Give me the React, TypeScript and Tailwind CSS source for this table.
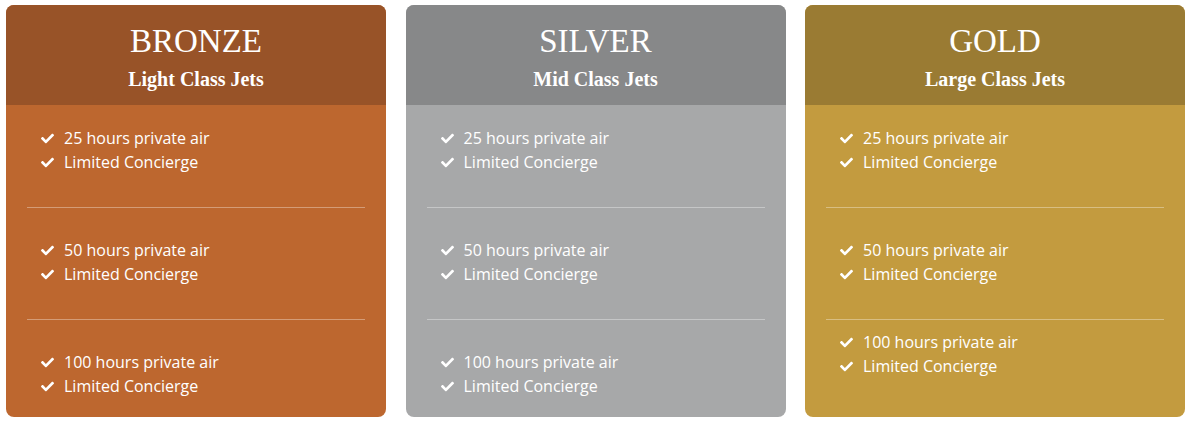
import React from "react";
import { FaCheck } from "react-icons/fa";

type Plan = {
  title: string;
  subtitle: string;
  header: string;
  body: string;
  sections: { hours: string; pt: string }[];
};

const plans: Plan[] = [
  {
    title: "BRONZE",
    subtitle: "Light Class Jets",
    header: "bg-[#985328]",
    body: "bg-[#bd672f]",
    sections: [
      { hours: "25 hours private air", pt: "pt-[21px] pb-[33px]" },
      { hours: "50 hours private air", pt: "pt-[30px] pb-[33px]" },
      { hours: "100 hours private air", pt: "pt-[30px] pb-[19px]" },
    ],
  },
  {
    title: "SILVER",
    subtitle: "Mid Class Jets",
    header: "bg-[#878889]",
    body: "bg-[#a7a8a9]",
    sections: [
      { hours: "25 hours private air", pt: "pt-[21px] pb-[33px]" },
      { hours: "50 hours private air", pt: "pt-[30px] pb-[33px]" },
      { hours: "100 hours private air", pt: "pt-[30px] pb-[19px]" },
    ],
  },
  {
    title: "GOLD",
    subtitle: "Large Class Jets",
    header: "bg-[#9a7b33]",
    body: "bg-[#c39b3f]",
    sections: [
      { hours: "25 hours private air", pt: "pt-[21px] pb-[33px]" },
      { hours: "50 hours private air", pt: "pt-[30px] pb-[33px]" },
      { hours: "100 hours private air", pt: "pt-[10px] pb-[19px]" },
    ],
  },
];

function Item({ text }: { text: string }) {
  return (
    <li className="flex items-center h-[24px]">
      <FaCheck className="w-[13px] h-[13px] text-white shrink-0" />
      <span className="ml-[10px]">{text}</span>
    </li>
  );
}

function Card({ plan }: { plan: Plan }) {
  return (
    <div className={`flex flex-col rounded-[8px] overflow-hidden h-[412px] ${plan.body}`}>
      <div
        className={`${plan.header} h-[100px] flex flex-col items-center pt-[16px] text-white`}
        style={{ fontFamily: '"Liberation Serif", "DejaVu Serif", serif' }}
      >
        <div className="text-[33px] leading-[40px]">{plan.title}</div>
        <div className="text-[20px] leading-[28px] font-bold mt-[4px]">{plan.subtitle}</div>
      </div>
      <div
        className="flex-1 px-[21px] text-white text-[16px] font-medium"
        style={{ fontFamily: '"Open Sans", "Noto Sans", sans-serif' }}
      >
        {plan.sections.map((s, i) => (
          <div
            key={i}
            className={`${s.pt} ${i < plan.sections.length - 1 ? "border-b border-white/35" : ""}`}
          >
            <ul className="pl-[14px]">
              <Item text={s.hours} />
              <Item text="Limited Concierge" />
            </ul>
          </div>
        ))}
      </div>
    </div>
  );
}

export default function App() {
  return (
    <div className="w-[1192px] h-[423px] bg-white pt-[5px] pl-[6px] pr-[7px]">
      <div className="grid grid-cols-3 gap-x-[19.5px]">
        {plans.map((p) => (
          <Card key={p.title} plan={p} />
        ))}
      </div>
    </div>
  );
}
